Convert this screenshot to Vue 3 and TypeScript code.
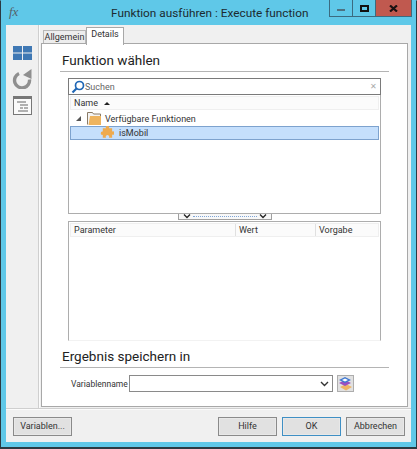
<script setup lang="ts">
const sideIcons = ['grid', 'undo', 'form'];
</script>

<template>
  <div class="win">
    <header class="title">
      <i class="fx">fx</i>
      <span class="caption">Funktion ausführen : Execute function</span>
      <div class="controls">
        <div class="ctl"><span class="min"></span></div>
        <div class="ctl"><span class="max"></span></div>
        <div class="ctl close">
          <svg width="9" height="7" viewBox="0 0 9 7"><path d="M1 0.5 L8 6.5 M8 0.5 L1 6.5" stroke="#1b1212" stroke-width="2.200" fill="none" /></svg>
        </div>
      </div>
    </header>
    <div class="body">
      <div class="main">
        <aside class="side">
          <template v-for="s in sideIcons" :key="s">
            <svg v-if="s === 'grid'" width="19" height="14" viewBox="0 0 19 14"><path fill="#3f78b4" d="M0 0h9v6.500H0zM10 0h9v6.500h-9zM0 7.500h9V14H0zM10 7.500h9V14h-9z" /></svg>
            <svg v-else-if="s === 'undo'" class="undo" width="20" height="21" viewBox="0 0 20 21"><path d="M7 5.500 A7.500 7.500 0 1 0 17.500 11.500" fill="none" stroke="#8f8f8f" stroke-width="3.400" /><path d="M19.500 1 L19.500 11 L11 7 Z" fill="#8f8f8f" /></svg>
            <svg v-else width="19" height="19" viewBox="0 0 19 19"><rect x="0.500" y="0.500" width="18" height="18" fill="#fafafa" stroke="#777" /><rect x="1" y="1" width="17" height="2" fill="#777" /><path d="M4 6h9M7 9h8M7 12h3M11 12h4M5 15h10" stroke="#666" stroke-width="1" /></svg>
          </template>
        </aside>
        <div class="tabs">
          <div class="tabbar">
            <div class="tab">Allgemein</div>
            <div class="tab active">Details</div>
          </div>
          <section class="pane">
            <h2 class="heading first">Funktion wählen</h2>
            <div class="block">
              <div class="search">
                <svg width="14" height="14" viewBox="0 0 14 14"><circle cx="8.500" cy="5.500" r="4" fill="none" stroke="#1f66b5" stroke-width="1.700" /><path d="M5.500 8.500 L1.500 12.500" stroke="#1f66b5" stroke-width="2.200" /></svg>
                <span class="ph">Suchen</span>
                <span class="clear">✕</span>
              </div>
              <div class="tree">
                <div class="thead"><span>Name</span><span class="sort"></span></div>
                <div class="row">
                  <span class="exp"></span>
                  <svg width="14" height="13" viewBox="0 0 14 13"><path d="M0.500 12.500V0.500h5l1 1.500h7v2" fill="#f4f4f4" stroke="#8a7b66" /><path d="M3 4h11v9H1.500z" fill="#eeb45f" /></svg>
                  <span>Verfügbare Funktionen</span>
                </div>
                <div class="row sel">
                  <svg width="14" height="14" viewBox="0 0 15 14"><path fill="#eeaa4e" d="M3 2h3.500a1.800 1.800 0 1 1 3 0H13v3.500a1.800 1.800 0 1 1 0 3V12H9.500a1.800 1.800 0 1 0-3 0H3V9a1.800 1.800 0 1 1 0-3.500z" /></svg>
                  <span>isMobil</span>
                </div>
              </div>
              <div class="grip">
                <svg width="8" height="5" viewBox="0 0 8 5"><path d="M1 0.500 L4 3.500 L7 0.500" stroke="#222" stroke-width="1.300" fill="none" /></svg>
                <span class="dots"></span>
                <svg width="8" height="5" viewBox="0 0 8 5"><path d="M1 0.500 L4 3.500 L7 0.500" stroke="#222" stroke-width="1.300" fill="none" /></svg>
              </div>
              <div class="params">
                <div class="phead">
                  <span class="c1">Parameter</span>
                  <span class="c2">Wert</span>
                  <span class="c3">Vorgabe</span>
                </div>
              </div>
            </div>
            <h2 class="heading second">Ergebnis speichern in</h2>
            <div class="varrow">
              <label>Variablenname</label>
              <div class="combo">
                <svg width="9" height="6" viewBox="0 0 9 6"><path d="M1 1 L4.500 4.500 L8 1" stroke="#333" stroke-width="1.400" fill="none" /></svg>
              </div>
              <button class="iconbtn">
                <svg width="15" height="15" viewBox="0 0 15 15">
                  <path d="M2 11 L8 8 L14 11 L8 14.500z" fill="#efb465" />
                  <path d="M1 7 L7 4 L13 7 L7 10z" fill="#9a4fc0" />
                  <path d="M1 4 L7 1 L13 4 L7 7z" fill="#3f78d0" />
                  <path d="M4 4 L7 2.500 L10 4 L7 5.500z" fill="#fff" />
                </svg>
              </button>
            </div>
          </section>
        </div>
      </div>
      <footer class="foot">
        <button class="btn">Variablen...</button>
        <div class="right">
          <button class="btn">Hilfe</button>
          <button class="btn def">OK</button>
          <button class="btn">Abbrechen</button>
        </div>
      </footer>
    </div>
  </div>
</template>

<style>
html, body { margin: 0; background: #fff; }
</style>

<style scoped>
.win {
  width: 417px;
  height: 449px;
  box-sizing: border-box;
  background: #5fc8e8;
  border: 1px solid #2b3a42;
  border-top-color: #5fc8e8;
  border-bottom-width: 2px;
  padding: 0 5px 5px;
  display: flex;
  flex-direction: column;
  font-family: Roboto, "Open Sans", sans-serif;
  font-size: 9px;
  color: #333;
}
.title {
  height: 24px;
  display: flex;
  align-items: flex-start;
  position: relative;
  flex: none;
}
.fx {
  font-family: "Liberation Serif", serif;
  font-size: 13px;
  color: #55626a;
  margin: 3px 0 0 3px;
}
.caption {
  position: absolute;
  left: 105px;
  top: 3px;
  font-size: 11.800px;
  line-height: 18px;
  color: #1c2a30;
  white-space: nowrap;
}
.controls { margin-left: auto; margin-right: -1px; display: flex; height: 17px; border: 1px solid #3b6b80; border-top: 0; margin-top: -1px; box-sizing: border-box; }
.ctl { width: 22px; display: flex; align-items: center; justify-content: center; border-right: 1px solid #3b6b80; }
.ctl.close { width: 35px; background: #c0594f; border-right: 0; }
.min { width: 8px; height: 2px; background: #4d7282; margin-top: 3px; }
.max { width: 5px; height: 3px; border: 2px solid #111; border-top-width: 2px; }
.body {
  flex: 1;
  background: #f0f0f0;
  display: flex;
  flex-direction: column;
  min-height: 0;
}
.main {
  flex: 1;
  display: flex;
  min-height: 0;
  border-bottom: 1px solid #cfcfcf;
  box-shadow: 0 1px 0 #fbfbfb;
}
.side {
  width: 33px;
  box-sizing: border-box;
  flex: none;
  border-right: 1px solid #cfcfcf;
  box-shadow: 1px 0 0 #fbfbfb;
  display: flex;
  flex-direction: column;
  align-items: center;
  padding-top: 21px;
}
.undo { margin-top: 8px; margin-bottom: 7px; }
.tabs {
  flex: 1;
  min-width: 0;
  padding: 2px 3px 1px 2px;
  display: flex;
  flex-direction: column;
}
.tabbar { height: 16px; display: flex; align-items: flex-end; padding-left: 2px; position: relative; z-index: 1; flex: none; }
.tab {
  height: 13px;
  width: 43px;
  box-sizing: border-box;
  background: #ededed;
  border: 1px solid #b8b8b8;
  border-bottom: 0;
  text-align: center;
  line-height: 13px;
  font-size: 9px;
}
.tab.active {
  height: 18px;
  width: 38px;
  background: #fff;
  border-color: #a8a8a8;
  margin-bottom: -2px;
  line-height: 13px;
}
.pane {
  flex: 1;
  min-height: 0;
  background: #fff;
  border: 1px solid #a8a8a8;
  display: flex;
  flex-direction: column;
  padding: 0 18px;
}
.heading {
  margin: 0;
  font-size: 13.500px;
  font-weight: 400;
  line-height: 20px;
  color: #222;
  border-bottom: 1px solid #b4b4b4;
  padding: 2px 0 1px 2px;
  flex: none;
}
.heading.first { margin-top: 4px; }
.heading.second { margin-top: 3px; }
.block { margin: 6px 8px 0; display: flex; flex-direction: column; flex: none; }
.search {
  height: 15px;
  border: 1px solid #7a7a7a;
  display: flex;
  align-items: center;
  padding-left: 2px;
  color: #666;
  background: #fff;
}
.clear { margin-left: auto; margin-right: 3px; font-size: 8px; color: #aaa; }
.tree {
  height: 116px;
  border: 1px solid #adadad;
  border-top: 0;
  padding: 1px;
  display: flex;
  flex-direction: column;
}
.thead {
  height: 12px;
  flex: none;
  background: #fbfbfb;
  border: 1px solid #efefef;
  display: flex;
  align-items: center;
  padding-left: 3px;
  margin-bottom: 2px;
}
.sort {
  width: 0; height: 0;
  border-left: 3px solid transparent;
  border-right: 3px solid transparent;
  border-bottom: 3px solid #222;
  margin-left: 6px;
}
.row {
  height: 13px;
  display: flex;
  align-items: center;
  flex: none;
}
.row:not(.sel) { padding-left: 6px; }
.exp {
  width: 0; height: 0;
  border-left: 5px solid transparent;
  border-bottom: 5px solid #555;
  margin-right: 6px;
}
.row svg { margin-right: 4px; }
.row.sel {
  background: #c5dffc;
  border: 1px solid #7da2ce;
  height: 12px;
  padding-left: 29px;
  margin-top: 1px;
}
.row.sel svg { margin-right: 5px; }
.grip {
  width: 94px;
  height: 6px;
  box-sizing: border-box;
  border: 1px solid #a0a0a0;
  border-top: 0;
  background: #f8f8f8;
  align-self: center;
  display: flex;
  align-items: center;
  justify-content: space-between;
  padding: 0 4px;
  gap: 2px;
}
.dots { flex: 1; border-top: 1px dotted #7fa6d8; }
.params {
  height: 116px;
  margin-top: 1px;
  border: 1px solid #adadad;
  padding: 1px;
  border-bottom-color: #f2f2f2;
}
.phead { display: flex; height: 12px; background: #fbfbfb; border: 1px solid #efefef; line-height: 13px; }
.phead span { padding-left: 3px; box-sizing: border-box; border-right: 1px solid #e0e0e0; }
.c1 { width: 165px; }
.c2 { width: 80px; }
.c3 { flex: 1; border-right: 0 !important; }
.varrow { display: flex; align-items: center; margin-top: 7px; padding-left: 11px; flex: none; }
label { width: 58px; flex: none; font-size: 8.500px; white-space: nowrap; }
.combo {
  width: 204px;
  height: 17px;
  flex: none;
  box-sizing: border-box;
  border: 1px solid #8a8a8a;
  background: #fff;
  display: flex;
  align-items: center;
  justify-content: flex-end;
  padding-right: 3px;
}
.iconbtn {
  width: 17px;
  height: 17px;
  margin-left: 4px;
  padding: 0;
  box-sizing: border-box;
  border: 1px solid #adadad;
  background: #e1e1e1;
  display: flex;
  align-items: center;
  justify-content: center;
}
.foot {
  height: 33px;
  flex: none;
  display: flex;
  align-items: center;
  justify-content: space-between;
  padding: 1px 6px 0 7px;
  box-sizing: border-box;
}
.right { display: flex; gap: 5px; }
.btn {
  width: 59px;
  height: 19px;
  box-sizing: border-box;
  border: 1px solid #8a8a8a;
  background: #e1e1e1;
  box-shadow: inset 0 0 0 1px #e8e8e8;
  font-family: inherit;
  font-size: 9px;
  color: #333;
  padding: 0;
}
.btn.def { border-color: #3f8fc4; }
</style>
